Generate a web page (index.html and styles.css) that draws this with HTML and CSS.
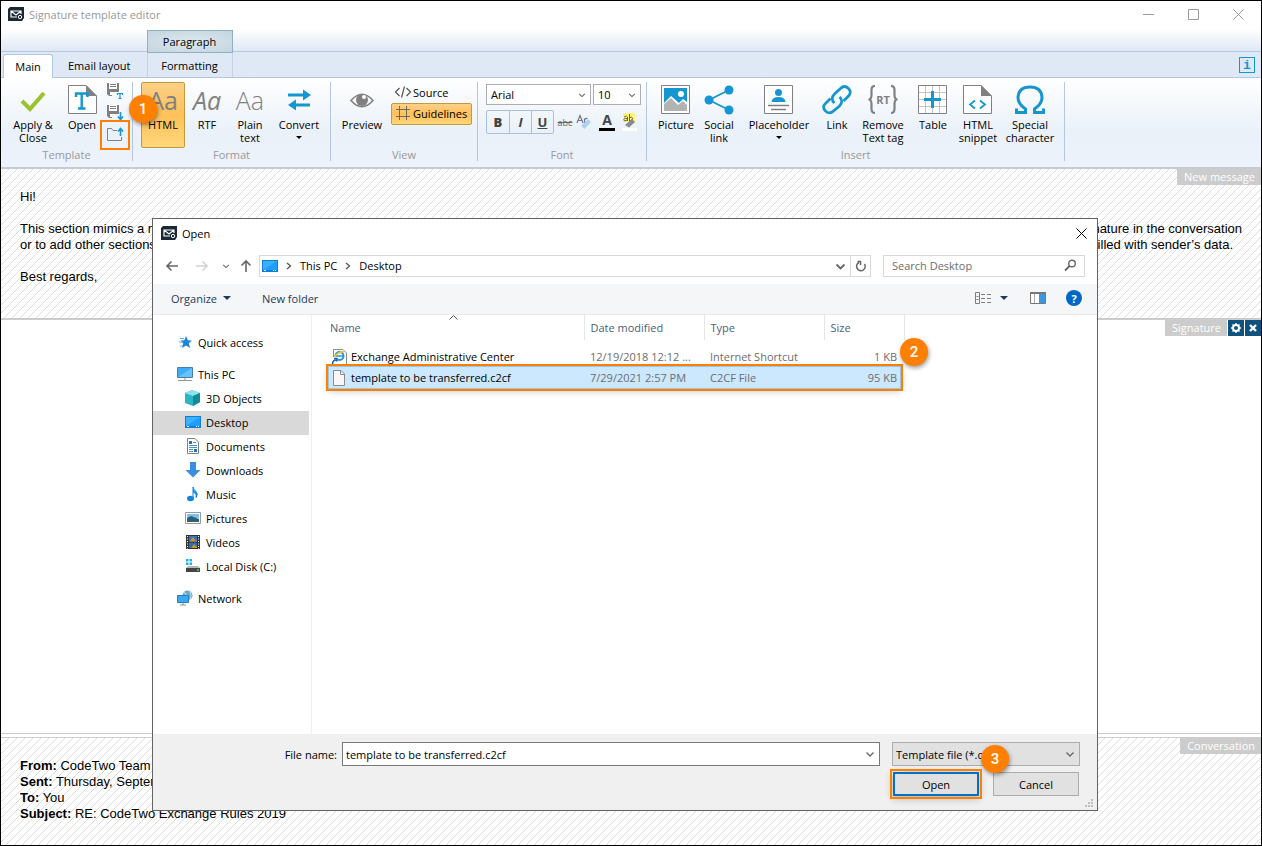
FILE: index.html
```html
<!DOCTYPE html>
<html lang="en">
    <head>
        <meta charset="UTF-8" />
        <meta name="viewport" content="width=device-width, initial-scale=1.0" />
        <title>Signature template editor</title>
        <link rel="stylesheet" href="styles.css">
    </head>
    <body>
        <!-- shared icons -->
        <svg class="defs" aria-hidden="true">
            <symbol id="app" viewBox="0 0 16 14">
                <path d="M2 0H16V11L14 14H0V2Z" fill="#1b2836" />
                <path d="M9 10H3V4H13V7M3 4L8 8L13 4" fill="none" stroke="#fff" stroke-width="1.2" />
                <circle cx="12" cy="10" r="1.7" fill="none" stroke="#fff" />
            </symbol>
            <symbol id="chev" viewBox="0 0 10 10">
                <path d="M1.5 3.5L5 7L8.5 3.5" fill="none" stroke="#666" stroke-width="1.3" />
            </symbol>
            <symbol id="desk" viewBox="0 0 16 12">
                <rect width="16" height="12" fill="#0f7fd6" />
                <path d="M1 1H15V10H1Z" fill="#1e9fff" />
                <path d="M1 10L15 1H1Z" fill="#3bb0ff" />
                <path d="M2 10.5H4M11 10.5H12M13 10.5H14" stroke="#fff" />
            </symbol>
        </svg>

        <div class="window">
            <header class="titlebar">
                <svg width="16" height="14"><use href="#app" /></svg>
                <h1>Signature template editor</h1>
                <div class="window-buttons">
                    <button aria-label="Minimize"><svg width="11" height="11"><path d="M0 5.5H11" /></svg></button>
                    <button aria-label="Maximize"><svg width="11" height="11"><path d="M.5 .5H10.5V10.5H.5Z" /></svg></button>
                    <button aria-label="Close"><svg width="11" height="11"><path d="M.5 .5L10.5 10.5M10.5 .5L.5 10.5" /></svg></button>
                </div>
            </header>

            <nav class="tabs">
                <button class="tab active">Main</button>
                <button class="tab">Email layout</button>
                <div class="context">
                    <span class="context-title">Paragraph</span>
                    <button class="tab">Formatting</button>
                </div>
                <button class="info" aria-label="Info">i</button>
            </nav>

            <div class="ribbon">
                <section class="group">
                    <div class="tools tools-template">
                        <button class="tool">
                            <svg width="30" height="30"><path d="M4 16L12 24L26 8" fill="none" stroke="#99c22c" stroke-width="4" /></svg>
                            Apply &amp;<br>Close
                        </button>
                        <button class="tool">
                            <svg width="30" height="30">
                                <path d="M1.5 .5H19L29.500 11V28.500H1.500Z" fill="#fff" stroke="#808080" />
                                <path d="M19 0V11H30Z" fill="#808080" />
                                <path d="M9 12V8.500H20.500V12M14.700 8.500V23M11 23.500H18.500" fill="none" stroke="#1696d0" stroke-width="2.4" />
                            </svg>
                            Open
                        </button>
                        <div class="mini">
                            <button aria-label="Save as template">
                                <svg width="18" height="18">
                                    <path d="M1 1H13V10H6V14H3L1 12Z" fill="#808080" />
                                    <path d="M3 1H11V7H3Z" fill="#fff" />
                                    <path d="M4 2.500H10M4 4.500H10" stroke="#808080" />
                                    <path d="M4 10H6V13H4Z" fill="#fff" />
                                    <path d="M11.500 13V11.500H16.500V13M14 11.500V16.500M12.500 16.500H15.500" fill="none" stroke="#1696d0" stroke-width="1.200" />
                                </svg>
                            </button>
                            <button aria-label="Export">
                                <svg width="18" height="18">
                                    <path d="M1 1H13V10H6V14H3L1 12Z" fill="#808080" />
                                    <path d="M3 1H11V7H3Z" fill="#fff" />
                                    <path d="M4 2.500H10M4 4.500H10" stroke="#808080" />
                                    <path d="M4 10H6V13H4Z" fill="#fff" />
                                    <path d="M14.500 8V15M12 12.500L14.500 15.500L17 12.500" fill="none" stroke="#1696d0" stroke-width="1.600" />
                                </svg>
                            </button>
                            <button class="marked" aria-label="Import">
                                <svg width="18" height="18">
                                    <path d="M11 4.500H7L5.500 2.500H1.500V14.500H15.500V11" fill="none" stroke="#808080" />
                                    <path d="M14.500 2V10M12 5.500L14.500 2.500L17 5.500" fill="none" stroke="#1696d0" stroke-width="1.600" />
                                </svg>
                            </button>
                            <span class="callout callout-import">1</span>
                        </div>
                    </div>
                    <h2>Template</h2>
                </section>

                <section class="group">
                    <div class="tools tools-format">
                        <button class="tool pressed"><span class="aa">Aa</span>HTML</button>
                        <button class="tool"><span class="aa aa-italic">Aa</span>RTF</button>
                        <button class="tool"><span class="aa aa-light">Aa</span>Plain<br>text</button>
                        <button class="tool">
                            <svg width="30" height="30">
                                <path d="M4 10H22M26 20H9" stroke="#1696d0" stroke-width="3" />
                                <path d="M19 4.500L27 10L19 15.500ZM12 14.500L4 20L12 25.500Z" fill="#1696d0" />
                            </svg>
                            Convert<i class="caret"></i>
                        </button>
                    </div>
                    <h2>Format</h2>
                </section>

                <section class="group">
                    <div class="tools tools-view">
                        <button class="tool">
                            <svg width="30" height="30">
                                <path d="M4 15.500Q15 3 26 15.500Q15 28 4 15.500Z" fill="none" stroke="#808080" stroke-width="1.600" />
                                <circle cx="15" cy="15" r="6" fill="#808080" />
                                <circle cx="17" cy="12" r="2" fill="#fff" />
                            </svg>
                            Preview
                        </button>
                        <div class="view-stack">
                            <button class="line-tool">
                                <svg width="18" height="14"><path d="M5.500 3L1.500 7L5.500 11M12.500 3L16.500 7L12.500 11M10.500 1.500L7.500 12.500" fill="none" stroke="#555" stroke-width="1.200" /></svg>
                                Source
                            </button>
                            <button class="line-tool pressed">
                                <svg width="18" height="14"><path d="M5.500 0V14M12.500 0V14M2 3.500H16M2 10.500H16" fill="none" stroke="#706a5c" /></svg>
                                Guidelines
                            </button>
                        </div>
                    </div>
                    <h2>View</h2>
                </section>

                <section class="group">
                    <div class="tools tools-font">
                        <div class="font-row">
                            <div class="select font-family">
                                <select aria-label="Font family"><option>Arial</option></select>
                                <svg width="8" height="10"><use href="#chev" /></svg>
                            </div>
                            <div class="select font-size">
                                <select aria-label="Font size"><option>10</option></select>
                                <svg width="8" height="10"><use href="#chev" /></svg>
                            </div>
                        </div>
                        <div class="font-row">
                            <div class="biu">
                                <button><b>B</b></button>
                                <button><em>I</em></button>
                                <button><u>U</u></button>
                            </div>
                            <button class="fx"><s>abc</s></button>
                            <button class="fx" aria-label="Clear formatting">
                                <svg width="18" height="18">
                                    <path d="M1 10L4 2.500L7 10M2 7.500H6M8.500 10V5.500M8.500 7Q9.500 5 11.500 5.500" fill="none" stroke="#6d7682" stroke-width="1.200" />
                                    <path d="M5 13L12 6L15 9L8.500 16Z" fill="#a9d3f2" />
                                </svg>
                            </button>
                            <button class="fx font-color">A</button>
                            <button class="fx" aria-label="Highlight">
                                <svg width="18" height="18">
                                    <rect x="3" width="12" height="9" fill="#fdf47a" />
                                    <path d="M2 15H17V18H2Z" fill="#fff" />
                                    <path d="M4 4Q7 2 7.500 4V8M7 5.500Q3 5 4 7.500Q6 8.500 7.500 6.500M9.500 1V8Q13 8 12.500 5Q11.500 3 9.500 5" fill="none" stroke="#6b6b50" />
                                    <path d="M5 12L12 6L15 9L9 14.500Z" fill="#8a8a8a" />
                                </svg>
                            </button>
                        </div>
                    </div>
                    <h2>Font</h2>
                </section>

                <section class="group">
                    <div class="tools tools-insert">
                        <button class="tool">
                            <svg width="30" height="30">
                                <path d="M.5 .5H28.500V28.500H.5Z" fill="#fff" stroke="#808080" />
                                <path d="M3 3H26V17L22 14L18 18L10 11L3 18Z" fill="#1696d0" />
                                <circle cx="20" cy="9" r="3" fill="#fff" />
                                <path d="M3 19L10 13L17 20L22 16L26 20V26H3Z" fill="#b3b3b3" />
                            </svg>
                            Picture
                        </button>
                        <button class="tool">
                            <svg width="30" height="30">
                                <path d="M25 5L5 15L25 25" fill="none" stroke="#1696d0" stroke-width="1.800" />
                                <g fill="#1696d0"><circle cx="25" cy="5" r="4.500" /><circle cx="5" cy="15" r="4.500" /><circle cx="25" cy="25" r="4.500" /></g>
                            </svg>
                            Social<br>link
                        </button>
                        <button class="tool">
                            <svg width="30" height="30">
                                <path d="M.5 .5H28.500V28.500H.5Z" fill="#fff" stroke="#808080" />
                                <circle cx="14.500" cy="7.500" r="3.500" fill="#1696d0" />
                                <path d="M7.500 17Q8 12 14.500 12Q21 12 21.500 17Z" fill="#1696d0" />
                                <path d="M4 20.500H25M7 24.500H22" stroke="#808080" stroke-width="1.600" />
                            </svg>
                            Placeholder<i class="caret"></i>
                        </button>
                        <button class="tool">
                            <svg width="30" height="30" fill="none" stroke="#1696d0" stroke-width="2.800">
                                <path d="M12.500 18C9.500 15.500 9.500 12 12.500 9L18.500 3.500C21 1 24 1 26.500 3.500C29 6 28.500 9 26.500 11L21.500 16" />
                                <path d="M17.500 12C20.500 14.500 20.500 18 17.500 21L11.500 26C9 28.500 5.500 28.500 3.500 26C1 23.500 1 20.500 3.500 18.500L8.500 13.500" />
                            </svg>
                            Link
                        </button>
                        <button class="tool">
                            <svg width="30" height="30">
                                <path d="M7 1Q3.500 1 3.500 5V10Q3.500 14.500 .5 14.500Q3.500 14.500 3.500 19V24Q3.500 28 7 28M23 1Q26.500 1 26.500 5V10Q26.500 14.500 29.500 14.500Q26.500 14.500 26.500 19V24Q26.500 28 23 28" fill="none" stroke="#808080" stroke-width="2.200" />
                                <text x="15" y="19" text-anchor="middle" class="rt">RT</text>
                            </svg>
                            Remove<br>Text tag
                        </button>
                        <button class="tool">
                            <svg width="30" height="30">
                                <path d="M.5 .5H28.500V28.500H.5Z" fill="#fff" />
                                <path d="M7.500 0V29M14.500 0V29M21.500 0V29M0 7.500H29M0 14.500H29M0 21.500H29" stroke="#c4c4c4" />
                                <path d="M.5 .5H28.500V28.500H.5Z" fill="none" stroke="#808080" />
                                <path d="M14.500 6V23M6 14.500H23" stroke="#1696d0" stroke-width="3" />
                            </svg>
                            Table
                        </button>
                        <button class="tool">
                            <svg width="30" height="30">
                                <path d="M.5 .5H18L28.500 11V28.500H.5Z" fill="#fff" stroke="#808080" />
                                <path d="M18 0V11H29Z" fill="#808080" />
                                <path d="M12 15.500L7 19.500L12 23.500M17 15.500L22 19.500L17 23.500" fill="none" stroke="#1696d0" stroke-width="1.800" />
                            </svg>
                            HTML<br>snippet
                        </button>
                        <button class="tool">
                            <svg width="30" height="30">
                                <path d="M1.500 23.500V27.500H10.500V24Q3 19 3 12.500Q3.500 2 15 2Q26.500 2 27 12.500Q27 19 19.500 24V27.500H28.500V23.500" fill="none" stroke="#1696d0" stroke-width="3" />
                            </svg>
                            Special<br>character
                        </button>
                    </div>
                    <h2>Insert</h2>
                </section>
            </div>

            <main class="preview">
                <section class="pane pane-message">
                    <span class="tag">New message</span>
                    <p>Hi!</p>
                    <p>
                        <span class="row"><span>This section mimics a new</span><span>message. You can set a different signature in the conversation</span></span>
                        <span class="row row-last"><span>or to add other sections.</span><span>The placeholders are filled with sender’s data.</span></span>
                    </p>
                    <p>Best regards,</p>
                </section>
                <section class="pane pane-signature">
                    <div class="signature-bar">
                        <span class="tag">Signature</span>
                        <button aria-label="Signature settings"><svg width="16" height="16"><circle cx="8" cy="8" r="3" fill="none" stroke="#fff" stroke-width="2" /><path d="M8 3V5M8 11V13M3 8H5M11 8H13M4.500 4.500L6 6M10 10L11.500 11.500M4.500 11.500L6 10M10 6L11.500 4.500" stroke="#fff" stroke-width="1.400" /></svg></button>
                        <button aria-label="Remove signature"><svg width="16" height="16"><path d="M5 5L11 11M11 5L5 11" stroke="#fff" stroke-width="2.400" /></svg></button>
                    </div>
                </section>
                <section class="pane pane-conversation">
                    <span class="tag">Conversation</span>
                    <p>
                        <b>From:</b> CodeTwo Team<br>
                        <b>Sent:</b> Thursday, September 5, 2019<br>
                        <b>To:</b> You<br>
                        <b>Subject:</b> RE: CodeTwo Exchange Rules 2019
                    </p>
                </section>
            </main>

            <!-- file picker -->
            <div class="dialog" role="dialog" aria-labelledby="dialog-title">
                <header class="dialog-title">
                    <svg width="16" height="14"><use href="#app" /></svg>
                    <h2 id="dialog-title">Open</h2>
                    <button aria-label="Close"><svg width="11" height="11"><path d="M.5 .5L10.500 10.500M10.500 .5L.5 10.500" stroke="#000" /></svg></button>
                </header>

                <div class="dialog-nav">
                    <button aria-label="Back"><svg width="14" height="14"><path d="M13 7H2M6.500 2.500L2 7L6.500 11.500" fill="none" stroke="#666" stroke-width="1.600" /></svg></button>
                    <button aria-label="Forward"><svg width="14" height="14"><path d="M1 7H12M7.500 2.500L12 7L7.500 11.500" fill="none" stroke="#d2d2d2" stroke-width="1.600" /></svg></button>
                    <button class="recent" aria-label="Recent locations"><svg width="8" height="10" viewBox="0 0 10 10"><use href="#chev" /></svg></button>
                    <button class="up" aria-label="Up"><svg width="14" height="14"><path d="M7 13V2M2.500 6.500L7 2L11.500 6.500" fill="none" stroke="#666" stroke-width="1.600" /></svg></button>
                    <div class="address">
                        <svg width="16" height="12"><use href="#desk" /></svg>
                        <svg width="6" height="10"><path d="M1 2L4.500 5L1 8" fill="none" stroke="#555" stroke-width="1.300" /></svg>
                        <a href="#">This PC</a>
                        <svg width="6" height="10"><path d="M1 2L4.500 5L1 8" fill="none" stroke="#555" stroke-width="1.300" /></svg>
                        <a href="#">Desktop</a>
                        <button class="drop" aria-label="Previous locations"><svg width="11" height="10" viewBox="0 0 10 10"><path d="M1 3.500L5 7.500L9 3.500" fill="none" stroke="#666" stroke-width="1.800" /></svg></button>
                        <button class="refresh" aria-label="Refresh"><svg width="12" height="12"><path d="M9.500 4A4.300 4.300 0 1 1 4 2.500M2.500 1.500H5.500V5" fill="none" stroke="#666" stroke-width="1.500" /></svg></button>
                    </div>
                    <div class="search">
                        <input type="search" aria-label="Search Desktop" placeholder="Search Desktop" />
                        <svg width="13" height="13"><circle cx="8" cy="4.500" r="3.300" fill="none" stroke="#666" stroke-width="1.400" /><path d="M5.500 7L1 11.500" stroke="#666" stroke-width="1.800" /></svg>
                    </div>
                </div>

                <div class="dialog-tools">
                    <button>Organize <i class="caret"></i></button>
                    <button>New folder</button>
                    <button class="view-button" aria-label="Change view">
                        <svg width="17" height="12"><path d="M.5 .5H4.500V11.500H.5ZM6 2.500H10M12 2.500H16M6 6.500H10M12 6.500H16M6 10.500H10M12 10.500H16M1.500 4.500H3.500M1.500 7.500H3.500" fill="none" stroke="#7d7d7d" /></svg>
                        <i class="caret"></i>
                    </button>
                    <button aria-label="Preview pane">
                        <svg width="16" height="12"><path d="M.5 .5H15.500V11.500H.5Z" fill="#fff" stroke="#777" /><path d="M0 1H16" stroke="#777" stroke-width="2" /><path d="M4.500 2V11" stroke="#aaa" /><path d="M9 2H15V11H9Z" fill="#3b97e3" /></svg>
                    </button>
                    <button class="help" aria-label="Help">?</button>
                </div>

                <div class="dialog-body">
                    <ul class="places">
                        <li class="top"><svg width="16" height="16"><path d="M9 2L10.800 6.200L15 6.500L11.800 9.300L13 14L9 11.500L5 14L6.200 9.300L3.500 6.500L7.300 6.200Z" fill="#1c86dd" /><path d="M3 4.500H7M2 8H6M3 12H6" stroke="#5eb4ef" /></svg>Quick access</li>
                        <li class="top spaced"><svg width="16" height="16"><path d="M.5 1.500H15.500V11.500H.5Z" fill="#3daef5" stroke="#4a7fa5" /><path d="M1 11L15 2V11Z" fill="#66c4fa" /><path d="M8 12V14M1 14.500H15" stroke="#8a9aa8" /></svg>This PC</li>
                        <li><svg width="16" height="16"><path d="M0 3L7 0L15 3V12L8 16L0 13Z" fill="#2db5c6" /><path d="M0 3L7 0L15 3L8 6Z" fill="#8fe3ec" /><path d="M8 6L15 3V12L8 16Z" fill="#128a9c" /></svg>3D Objects</li>
                        <li class="current"><svg width="16" height="12"><use href="#desk" /></svg>Desktop</li>
                        <li><svg width="16" height="16"><path d="M2.500 .5H10L13.500 4V15.500H2.500Z" fill="#fff" stroke="#808080" /><path d="M4 7.500H12M4 9.500H12M4 11.500H8M4 13.500H8M8 4.500H11" stroke="#4c94c8" /><path d="M4 3H7V6H4ZM9 11H12V14H9Z" fill="#2374b0" /></svg>Documents</li>
                        <li><svg width="16" height="16"><path d="M5 0H11V8H15.500L8 15.500L.5 8H5Z" fill="#3b8ede" /></svg>Downloads</li>
                        <li><svg width="16" height="16"><ellipse cx="5.500" cy="12.500" rx="3.500" ry="2.800" fill="#1284e0" /><path d="M8 13V1Q8.500 4 11 5.500Q13.500 8 11 11.500Q12 7.500 8 6" fill="#1ca0f2" stroke="#1284e0" /></svg>Music</li>
                        <li><svg width="16" height="12"><path d="M.5 .5H15.500V11.500H.5Z" fill="#fff" stroke="#999" /><path d="M2 2H14V6H2Z" fill="#7ec0f5" /><path d="M2 6L6 4L14 7V10H2Z" fill="#2c6274" /></svg>Pictures</li>
                        <li><svg width="16" height="16"><path d="M1 1H15V15H1Z" fill="#333" /><path d="M4 2H12V7.500H4Z" fill="#3b72c4" /><path d="M4 8.500H12V14H4Z" fill="#3467b5" /><path d="M5 7L8 3L10 6L12 7V7.500H5ZM6 14L9 10L12 13V14Z" fill="#c49a25" /><path d="M2.500 2V15M13.500 2V15" stroke="#fff" stroke-dasharray="1 1.500" /></svg>Videos</li>
                        <li><svg width="16" height="16"><path d="M1 1H3.500V3.500H1ZM4.500 1H7V3.500H4.500ZM1 4.500H3.500V7H1ZM4.500 4.500H7V7H4.500Z" fill="#1fb0e8" /><path d="M3 8H13L15 10H1Z" fill="#b8b8b8" /><path d="M1 10H15V14H1Z" fill="#444" /><path d="M12 12H14" stroke="#37e04d" stroke-width="1.500" /></svg>Local Disk (C:)</li>
                        <li class="top spaced"><svg width="16" height="16"><circle cx="10.500" cy="5.500" r="5" fill="#6aa9cf" /><path d="M7 2Q11 5 10 10M13 1Q15 6 13 10" stroke="#c5e2f2" fill="none" /><path d="M.5 5.500H11.500V12.500H.5Z" fill="#39a9f4" stroke="#2a7cba" /><path d="M6 13V15M3 15H9" stroke="#7c97aa" /></svg>Network</li>
                    </ul>

                    <div class="files">
                        <table>
                            <thead>
                                <tr><th class="col-name">Name <svg class="sort" width="9" height="5"><path d="M.5 4.500L4.500 .5L8.500 4.500" fill="none" stroke="#555" /></svg></th><th class="col-date">Date modified</th><th class="col-type">Type</th><th class="col-size">Size</th></tr>
                            </thead>
                            <tbody>
                                <tr>
                                    <td><span class="file"><svg width="16" height="16"><path d="M2.500 .5H12L15.500 4V15.500H2.500Z" fill="#fff" stroke="#8a8a8a" /><circle cx="8.500" cy="7" r="4" fill="none" stroke="#2b93dd" stroke-width="2" /><path d="M5 7H12" stroke="#2b93dd" stroke-width="1.500" /><path d="M3 9Q7 2 13 3" fill="none" stroke="#f3c428" stroke-width="1.500" /><path d="M0 8H7V16H0Z" fill="#fff" /><path d="M1.500 15Q1.500 11 5.500 11M3 9.500H6V12.500" fill="none" stroke="#1e5fa8" stroke-width="1.500" /></svg>Exchange Administrative Center</span></td>
                                    <td>12/19/2018 12:12 ...</td>
                                    <td>Internet Shortcut</td>
                                    <td class="size">1 KB</td>
                                </tr>
                                <tr class="selected">
                                    <td><span class="file"><svg width="16" height="16"><path d="M2.500 .5H10L13.500 4V15.500H2.500Z" fill="#f7f7f7" stroke="#8a8a8a" /><path d="M9.500 .5V4.500H13.500" fill="none" stroke="#8a8a8a" /></svg>template to be transferred.c2cf</span></td>
                                    <td>7/29/2021 2:57 PM</td>
                                    <td>C2CF File</td>
                                    <td class="size">95 KB<span class="callout callout-file">2</span></td>
                                </tr>
                            </tbody>
                        </table>
                    </div>
                </div>

                <footer class="dialog-foot">
                    <label for="file-name">File name:</label>
                    <div class="select name-box">
                        <input id="file-name" type="text" value="template to be transferred.c2cf" />
                        <svg width="10" height="10"><use href="#chev" /></svg>
                    </div>
                    <div class="select type-box">
                        <select aria-label="File type"><option>Template file (*.c2cf)</option></select>
                        <svg width="10" height="10"><use href="#chev" /></svg>
                    </div>
                    <div class="actions">
                        <button class="open">Open<span class="callout callout-open">3</span></button>
                        <button>Cancel</button>
                    </div>
                    <svg class="grip" width="9" height="9"><path d="M6 0H8V2H6ZM3 3H5V5H3ZM6 3H8V5H6ZM0 6H2V8H0ZM3 6H5V8H3ZM6 6H8V8H6Z" fill="#bdbdbd" /></svg>
                </footer>
            </div>
        </div>
    </body>
</html>
```

FILE: styles.css
```css
* {
    box-sizing: border-box;
}

body {
    margin: 0;
    font: 11px/13px "Open Sans", sans-serif;
    color: #000;
}

h1,
h2,
p,
ul {
    margin: 0;
    padding: 0;
    font-size: 11px;
    font-weight: normal;
}

button,
input,
select {
    margin: 0;
    padding: 0;
    border: 0;
    background: none;
    font: inherit;
    color: inherit;
    border-radius: 0;
}

svg {
    flex: none;
    display: block;
}

.defs {
    position: absolute;
    width: 0;
    height: 0;
}

.window {
    position: relative;
    display: flex;
    flex-direction: column;
    height: 100vh;
    border: 1px solid #000;
    background: #fff;
}

/* title bar */
.titlebar {
    display: flex;
    align-items: center;
    gap: 5px;
    height: 28px;
    padding: 0 0 2px 7px;
}

.titlebar h1 {
    color: #999;
}

.window-buttons {
    display: flex;
    margin-left: auto;
}

.window-buttons button {
    width: 45px;
    height: 26px;
    display: flex;
    justify-content: center;
    align-items: center;
}

.window-buttons path {
    fill: none;
    stroke: #999;
}

/* tabs */
.tabs {
    display: flex;
    align-items: flex-end;
    height: 49px;
    padding: 0 6px 0 2px;
    border-bottom: 1px solid #b5c7de;
    background: linear-gradient(#fff, #dfe8f5 22px, #b5c7de 22px, #b5c7de 23px, #dfe8f5 23px);
}

.tab {
    height: 23px;
    padding: 0 15px;
}

.tab.active {
    height: 24px;
    width: 50px;
    padding: 0;
    margin-bottom: -1px;
    border: 1px solid #b5c7de;
    border-bottom: 0;
    border-radius: 3px 3px 0 0;
    background: #fff;
}

.context {
    display: flex;
    flex-direction: column;
    width: 86px;
    margin-left: 1px;
    border: 1px solid #c3d2e4;
    border-width: 0 1px;
}

.context .tab {
    padding: 0;
    height: 24px;
}

.context-title {
    height: 23px;
    margin: 0 -1px;
    border: 1px solid #8fb0c0;
    background: radial-gradient(#dde8ef, #c3d5de);
    line-height: 22px;
    text-align: center;
}

.info {
    width: 16px;
    height: 16px;
    margin: 0 0 4px auto;
    border: 1px solid #1696d0;
    color: #1696d0;
    font: bold 13px/13px "Liberation Mono", monospace;
}

/* ribbon */
.ribbon {
    display: flex;
    height: 91px;
    padding: 4px 0 6px;
    border-bottom: 2px solid #c4ccd8;
    background: linear-gradient(#fff, #eaf1f9 60%, #edf2fb);
}

.group {
    display: flex;
    flex-direction: column;
    border-right: 1px solid #b5c7de;
}

.group h2 {
    margin-top: auto;
    color: #999;
    text-align: center;
}

.tools {
    display: grid;
    align-items: start;
}

.tools-template {
    grid-template-columns: 50px 48px 18px;
    padding: 0 8px 0 7px;
}

.tools-format {
    grid-template-columns: 44px 44px 42px 56px;
    padding: 0 3px 0 8px;
}

.tools-view {
    grid-template-columns: 54px 81px;
    gap: 2px;
    padding: 0 5px 0 4px;
}

.tools-font {
    gap: 5px;
    padding: 2px 5px 0 8px;
}

.tools-insert {
    grid-template-columns: 40px 46px 74px 42px 50px 50px 40px 64px;
    padding: 0 2px 0 9px;
}

.tool {
    display: flex;
    flex-direction: column;
    align-items: center;
    height: 66px;
    padding-top: 2px;
    border: 1px solid transparent;
    border-radius: 2px;
    white-space: nowrap;
}

.tool svg,
.aa {
    margin-bottom: 3px;
}

.pressed {
    border: 1px solid #c39a3b;
    border-radius: 2px;
    background: linear-gradient(#fbd088, #ffc05a 50%, #ffd77a);
}

.aa {
    height: 30px;
    font-size: 25px;
    line-height: 30px;
    color: #808080;
}

.aa-italic {
    font-style: italic;
}

.aa-light {
    font-weight: 300;
}

.rt {
    font-size: 11px;
    font-weight: bold;
    fill: #808080;
}

.caret {
    margin-top: 5px;
    border: 3px solid transparent;
    border-top-color: #000;
    border-bottom: 0;
}

.mini {
    position: relative;
    display: flex;
    flex-direction: column;
    gap: 4px;
}

.mini button {
    height: 18px;
}

.marked {
    outline: 2px solid #ff8000;
    outline-offset: 4px;
}

/* numbered markers */
.callout {
    position: absolute;
    z-index: 5;
    width: 28px;
    height: 28px;
    border-radius: 50%;
    background: #ff8000;
    box-shadow: 1px 2px 4px rgba(0, 0, 0, 0.4);
    color: #fff;
    font: 500 15px/28px Roboto, sans-serif;
    text-align: center;
}

.callout-import {
    left: 23px;
    top: 13px;
}

.callout-file {
    left: 76px;
    top: -29px;
}

.callout-open {
    right: -32px;
    top: -29px;
}

.view-stack {
    display: grid;
    gap: 1px;
}

.line-tool {
    display: flex;
    align-items: center;
    gap: 1px;
    height: 20px;
    padding: 0 2px;
    border: 1px solid transparent;
}

.line-tool.pressed {
    height: 22px;
    padding-bottom: 2px;
    border-color: #c39a3b;
}

/* drop-downs */
.select {
    position: relative;
    border: 1px solid #abadb3;
    background: #fff;
}

.select select,
.select input {
    display: block;
    width: 100%;
    height: 100%;
    padding: 0 18px 0 4px;
    appearance: none;
    outline: 0;
}

.select svg {
    position: absolute;
    right: 4px;
    top: calc(50% - 5px);
    pointer-events: none;
}

.font-row {
    display: flex;
    gap: 2px;
}

.font-family {
    width: 105px;
    height: 21px;
}

.font-size {
    width: 48px;
    height: 21px;
}

.biu {
    display: flex;
    height: 24px;
    border: 1px solid #a9bfdc;
    border-radius: 2px;
}

.biu button {
    width: 22px;
    color: #444;
    font-size: 13px;
    font-weight: bold;
}

.biu button + button {
    border-left: 1px solid #a9bfdc;
}

.fx {
    display: flex;
    justify-content: center;
    align-items: center;
    width: 18px;
    height: 24px;
    color: #666;
    font-size: 9px;
}

.font-color {
    height: 21px;
    width: 16px;
    margin: 0 3px;
    border-bottom: 3px solid #000;
    color: #444;
    font-size: 14px;
    font-weight: bold;
}

/* message preview */
.preview {
    flex: 1;
    display: flex;
    flex-direction: column;
    font: 13px/16px "Liberation Sans", Arial, sans-serif;
}

.preview p {
    margin-bottom: 16px;
    font-size: 13px;
}

.pane {
    position: relative;
}

.pane-message,
.pane-conversation {
    padding: 20px 19px 17px;
    background: linear-gradient(135deg, #fff 45%, #dcdcdc 45%, #dcdcdc 55%, #fff 55%) 0 0 / 8px 8px;
}

.pane-signature {
    flex: 1;
    margin-bottom: 3px;
    border: 1px solid #ccc;
    border-width: 2px 0 1px;
}

.pane-conversation {
    border-top: 1px solid #ccc;
    padding-bottom: 7px;
}

.row {
    display: flex;
    justify-content: space-between;
    white-space: nowrap;
}

.row-last {
    padding-right: 9px;
}

.tag {
    height: 16px;
    padding: 0 6px 0 7px;
    background: #ccc;
    color: #fff;
    font: 11px/15px "Open Sans", sans-serif;
}

.pane > .tag {
    position: absolute;
    top: 0;
    right: 0;
}

.signature-bar {
    display: flex;
    justify-content: flex-end;
    gap: 1px;
}

.signature-bar button {
    width: 16px;
    height: 16px;
    background: #0f527d;
}

/* open dialog */
.dialog {
    position: absolute;
    top: 217px;
    right: 163px;
    bottom: 34px;
    left: 151px;
    display: flex;
    flex-direction: column;
    border: 1px solid #5f6266;
    background: #fff;
}

.dialog-title {
    display: flex;
    align-items: center;
    gap: 5px;
    height: 30px;
    padding: 0 10px 2px 8px;
}

.dialog-title button {
    margin-left: auto;
}

.dialog-nav {
    display: flex;
    align-items: center;
    gap: 8px;
    height: 35px;
    padding: 0 12px 2px;
}

.dialog-nav > button {
    width: 14px;
    margin-right: 8px;
}

.dialog-nav > .recent {
    width: 8px;
    margin: 0 1px 0 -3px;
}

.dialog-nav > .up {
    margin-right: -2px;
}

.address,
.search {
    display: flex;
    align-items: center;
    height: 22px;
    border: 1px solid #d9d9d9;
}

.address {
    flex: 1;
    gap: 8px;
    padding-left: 2px;
}

.address a {
    color: #000;
    text-decoration: none;
}

.drop {
    margin-left: auto;
}

.refresh {
    display: flex;
    justify-content: center;
    align-items: center;
    width: 20px;
    height: 20px;
    margin-left: -4px;
    border-left: 1px solid #d9d9d9;
}

.search {
    width: 202px;
    margin-left: 4px;
    padding: 0 7px 0 8px;
}

.search input {
    flex: 1;
    min-width: 0;
    outline: 0;
}

.search input::placeholder {
    color: #6d6d6d;
}

.dialog-tools {
    display: flex;
    align-items: center;
    gap: 22px;
    height: 31px;
    padding: 0 15px 2px 18px;
    border-bottom: 1px solid #e8eaec;
    background: #f5f6f7;
    color: #1e395b;
}

.dialog-tools button {
    display: flex;
    align-items: center;
    gap: 6px;
}

.dialog-tools button + button {
    margin-left: 9px;
}

.dialog-tools .caret {
    margin: 0;
    border-width: 4px;
    border-bottom: 0;
    border-top-color: #1e395b;
}

.dialog-tools .view-button {
    gap: 8px;
    margin-left: auto;
}

.dialog-tools .view-button + button {
    margin: 0;
}

.dialog-tools .help {
    justify-content: center;
    width: 16px;
    height: 16px;
    margin-left: -2px;
    border-radius: 50%;
    background: #0067c5;
    color: #fff;
    font-weight: bold;
}

.dialog-body {
    flex: 1;
    display: flex;
    min-height: 0;
}

.places {
    width: 159px;
    padding: 16px 2px 0 0;
    border-right: 1px solid #f0f0f0;
    list-style: none;
}

.places li {
    display: flex;
    align-items: center;
    gap: 5px;
    height: 24px;
    padding: 0 0 2px 32px;
}

.places .top {
    padding-left: 24px;
}

.places .spaced {
    margin-top: 8px;
}

.places .current {
    background: #d9d9d9;
}

.files {
    flex: 1;
    padding-left: 17px;
}

.files table {
    width: 571px;
    table-layout: fixed;
    border-collapse: collapse;
    color: #6d6d6d;
}

.files th {
    position: relative;
    height: 25px;
    padding: 0 6px;
    border-right: 1px solid #e5e5e5;
    color: #4c607a;
    font-weight: normal;
    text-align: left;
}

.files .col-name {
    width: 255px;
    padding-left: 1px;
}

.col-date,
.col-type {
    width: 120px;
}

.files .col-size {
    border-right: 0;
}

/* the header runs a little wider than the rows */
.col-size::after {
    content: "";
    position: absolute;
    top: 0;
    right: -5px;
    bottom: 0;
    border-right: 1px solid #e5e5e5;
}

.sort {
    position: absolute;
    top: 0;
    left: 47%;
}

.files tbody::before {
    content: "";
    display: block;
    height: 6px;
}

.files td {
    height: 21px;
    padding: 0 6px;
    white-space: nowrap;
}

.files td:first-child {
    padding-left: 2px;
}

.file {
    display: flex;
    align-items: center;
    gap: 4px;
    color: #000;
}

.files .size {
    position: relative;
    padding-right: 3px;
    text-align: right;
}

.selected {
    outline: 2px solid #ff8000;
    outline-offset: 1px;
    background: #cce8ff;
    box-shadow: 0 0 0 1px #9fc4e6, 0 2px 8px rgba(0, 0, 0, 0.3);
}

.dialog-foot {
    position: relative;
    display: grid;
    grid-template-columns: 184px 1fr 195px;
    align-content: start;
    align-items: center;
    gap: 6px 5px;
    height: 76px;
    padding: 8px 17px 12px 0;
    background: #f0f0f0;
}

.dialog-foot label {
    text-align: right;
}

.name-box,
.type-box {
    height: 24px;
}

.name-box {
    border-color: #7a7a7a;
}

.type-box {
    margin-left: 7px;
    background: #e1e1e1;
}

.name-box input,
.type-box select {
    padding-left: 3px;
}

.actions {
    grid-column: 1 / -1;
    display: flex;
    justify-content: flex-end;
    gap: 14px;
    padding-right: 1px;
}

.actions button {
    width: 86px;
    height: 24px;
    border: 1px solid #adadad;
    background: #e1e1e1;
}

.actions .open {
    position: relative;
    border: 2px solid #0070c8;
    outline: 2px solid #ff8000;
    outline-offset: 1px;
    box-shadow: 0 2px 8px rgba(0, 0, 0, 0.3);
}

.grip {
    position: absolute;
    right: 3px;
    bottom: 2px;
}
```
